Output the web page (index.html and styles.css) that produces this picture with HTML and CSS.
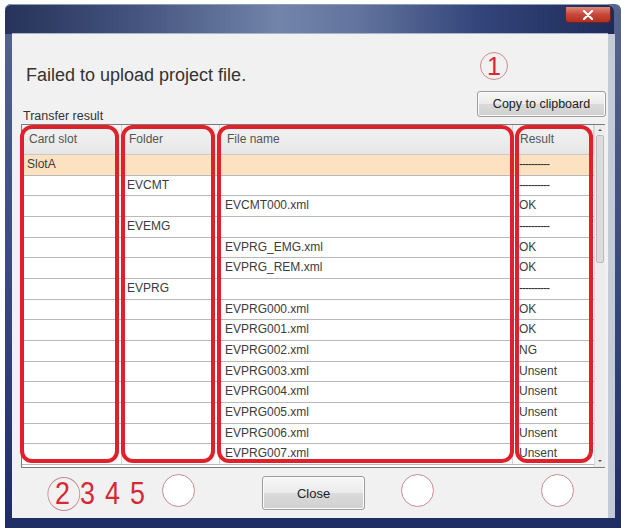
FILE: index.html
```html
<!DOCTYPE html>
<html lang="en">
<head>
  <meta charset="UTF-8">
  <title>Transfer result</title>
  <link rel="stylesheet" href="styles.css">
</head>
<body>

  <div class="window">
    <!-- Title bar -->
    <div class="titlebar">
      <button class="close-x" aria-label="Close">
        <svg width="12" height="10" viewBox="0 0 12 10">
          <path d="M2 1 L10 9 M10 1 L2 9" stroke="#fff" stroke-width="2.2" stroke-linecap="round"/>
        </svg>
      </button>
    </div>

    <div class="client">
      <!-- Message + copy button -->
      <div class="head">
        <div class="head-left">
          <p class="message">Failed to upload project file.</p>
          <p class="caption">Transfer result</p>
        </div>
        <div class="head-right">
          <span class="mark mark-1">1</span>
          <button class="btn btn-copy">Copy to clipboard</button>
        </div>
      </div>

      <!-- Result list -->
      <div class="grid">
        <div class="grid-main">
          <div class="row row-head">
            <div class="cell">Card slot</div>
            <div class="cell">Folder</div>
            <div class="cell">File name</div>
            <div class="cell">Result</div>
          </div>
          <div class="rows">
            <div class="row row-sel">
              <div class="cell">SlotA</div><div class="cell"></div><div class="cell"></div><div class="cell res"><span class="dash">----------</span></div>
            </div>
            <div class="row">
              <div class="cell"></div><div class="cell">EVCMT</div><div class="cell"></div><div class="cell res"><span class="dash">----------</span></div>
            </div>
            <div class="row">
              <div class="cell"></div><div class="cell"></div><div class="cell">EVCMT000.xml</div><div class="cell res">OK</div>
            </div>
            <div class="row">
              <div class="cell"></div><div class="cell">EVEMG</div><div class="cell"></div><div class="cell res"><span class="dash">----------</span></div>
            </div>
            <div class="row">
              <div class="cell"></div><div class="cell"></div><div class="cell">EVPRG_EMG.xml</div><div class="cell res">OK</div>
            </div>
            <div class="row">
              <div class="cell"></div><div class="cell"></div><div class="cell">EVPRG_REM.xml</div><div class="cell res">OK</div>
            </div>
            <div class="row">
              <div class="cell"></div><div class="cell">EVPRG</div><div class="cell"></div><div class="cell res"><span class="dash">----------</span></div>
            </div>
            <div class="row">
              <div class="cell"></div><div class="cell"></div><div class="cell">EVPRG000.xml</div><div class="cell res">OK</div>
            </div>
            <div class="row">
              <div class="cell"></div><div class="cell"></div><div class="cell">EVPRG001.xml</div><div class="cell res">OK</div>
            </div>
            <div class="row">
              <div class="cell"></div><div class="cell"></div><div class="cell">EVPRG002.xml</div><div class="cell res">NG</div>
            </div>
            <div class="row">
              <div class="cell"></div><div class="cell"></div><div class="cell">EVPRG003.xml</div><div class="cell res">Unsent</div>
            </div>
            <div class="row">
              <div class="cell"></div><div class="cell"></div><div class="cell">EVPRG004.xml</div><div class="cell res">Unsent</div>
            </div>
            <div class="row">
              <div class="cell"></div><div class="cell"></div><div class="cell">EVPRG005.xml</div><div class="cell res">Unsent</div>
            </div>
            <div class="row">
              <div class="cell"></div><div class="cell"></div><div class="cell">EVPRG006.xml</div><div class="cell res">Unsent</div>
            </div>
            <div class="row">
              <div class="cell"></div><div class="cell"></div><div class="cell">EVPRG007.xml</div><div class="cell res">Unsent</div>
            </div>
          </div>
        </div>

        <div class="scrollbar">
          <svg class="arrow" width="10" height="8" viewBox="0 0 10 8"><path d="M3 5 L5 3 L7 5 Z" fill="#555"/></svg>
          <div class="thumb"></div>
          <svg class="arrow arrow-down" width="10" height="8" viewBox="0 0 10 8"><path d="M3 3 L7 3 L5 5 Z" fill="#555"/></svg>
        </div>

        <!-- red annotation frames -->
        <div class="callout callout-slot"></div>
        <div class="callout callout-folder"></div>
        <div class="callout callout-file"></div>
        <div class="callout callout-result"></div>
      </div>

      <!-- Footer with annotation marks -->
      <div class="foot">
        <div class="digits">
          <span class="digit digit-ring">2</span>
          <span class="digit">3</span>
          <span class="digit">4</span>
          <span class="digit">5</span>
        </div>
        <span class="ring ring-a"></span>
        <button class="btn btn-close">Close</button>
        <span class="ring ring-b"></span>
        <span class="ring ring-c"></span>
      </div>
    </div>
  </div>

</body>
</html>
```

FILE: styles.css
```css
/* General */
body {
  margin: 0;
  width: 621px;
  height: 528px;
  overflow: hidden;
  background: #fff;
  font-family: "Liberation Sans", Arial, sans-serif;
  color: #333;
}

p {
  margin: 0;
}

/* Window frame */
.window {
  margin: 4px 0 0 5px;
  width: 616px;
  height: 530px;
  padding: 0 13px 0 7px;
  box-sizing: border-box;
  border-radius: 6px 6px 0 0;
  background: linear-gradient(to bottom, #56658c, #34457a 60%, #1d2d63);
}

.titlebar {
  height: 30px;
  display: flex;
  justify-content: flex-end;
  align-items: flex-start;
  margin: 0 -6px 0 -7px;
  padding-right: 3px;
  border-radius: 6px 6px 0 0;
  background: linear-gradient(to right, #26335a 0%, #45557f 22%, #7284aa 45%, #62749d 58%, #33447a 78%, #1f2c5a 100%);
  box-shadow: inset 0 1px 0 #8d9bbb;
}

.close-x {
  margin-top: 3px;
  width: 46px;
  height: 16px;
  padding: 0;
  display: flex;
  align-items: center;
  justify-content: center;
  border: 1px solid #6a2420;
  border-top: none;
  border-radius: 0 0 4px 4px;
  background: linear-gradient(to bottom, #e0867a, #c9473a 50%, #b3301f);
}

.client {
  width: 596px;
  height: 484px;
  padding: 0 3px 0 9px;
  box-sizing: border-box;
  display: flex;
  flex-direction: column;
  background: #f1f1f1;
  box-shadow: 7px 0 0 #c4cad6, 0 -1px 0 #a9b4cb;
}

/* Top part */
.head {
  height: 90px;
  display: flex;
  justify-content: space-between;
}

.message {
  margin-top: 30px;
  padding-left: 5px;
  font-size: 18px;
  line-height: 22px;
  color: #333;
}

.caption {
  margin: 22px 0 0 2px;
  font-size: 12.5px;
  line-height: 16px;
  color: #333;
}

.head-right {
  width: 129px;
  margin-right: -1px;
  display: flex;
  flex-direction: column;
  align-items: flex-start;
}

.mark {
  color: #d42a35;
}

.mark-1 {
  margin: 18px 0 0 3px;
  width: 28px;
  height: 28px;
  box-sizing: border-box;
  border: 1px solid #c98c93;
  border-radius: 50%;
  font-size: 25px;
  line-height: 27px;
  text-align: center;
}

.btn {
  font-family: "Liberation Sans", Arial, sans-serif;
  color: #222;
  border: 1px solid #9d9d9d;
  border-radius: 3px;
  background: linear-gradient(to bottom, #f7f7f7, #ebebeb 48%, #dadada 52%, #d0d0d0);
  box-shadow: inset 0 0 0 1px #fbfbfb;
  padding: 0;
}

.btn-copy {
  margin-top: 11px;
  width: 129px;
  height: 26px;
  font-size: 12.5px;
}

/* Result list */
.grid {
  position: relative;
  height: 344px;
  display: flex;
  border: 1px solid #7b7b7b;
  background: #fff;
}

.grid-main {
  width: 572px;
}

.row {
  display: grid;
  grid-template-columns: 100px 98px 293px 81px;
  height: 20.66px;
  box-sizing: border-box;
  border-bottom: 1px solid #b9b9b9;
  font-size: 12px;
  color: #3c3c3c;
}

.row-head {
  height: 30px;
  background: linear-gradient(to bottom, #f3f3f3, #e6e6e6);
  border-bottom: 1px solid #c9c9c9;
  color: #555;
}

.row-head .cell {
  padding-left: 7px;
  line-height: 29px;
}

.rows {
  height: 312px;
  overflow: hidden;
}

.row-sel {
  background: #fde2c2;
}

.cell {
  padding-left: 5px;
  border-right: 1px solid #d2d2d2;
  white-space: nowrap;
  overflow: hidden;
  line-height: 19px;
}

.cell.res {
  padding-left: 6px;
  border-right: none;
}

.dash {
  letter-spacing: -1px;
  color: #333;
}

.scrollbar {
  width: 10px;
  display: flex;
  flex-direction: column;
  align-items: center;
  background: #ececec;
  border-left: 1px solid #d9d9d9;
}

.arrow {
  margin-top: 1px;
}

.thumb {
  margin-top: 1px;
  width: 8px;
  height: 128px;
  box-sizing: border-box;
  border: 1px solid #bcbcbc;
  border-radius: 2px;
  background: #dcdcdc;
}

.arrow-down {
  margin-top: auto;
  margin-bottom: 2px;
}

/* red annotation frames over the list */
.callout {
  position: absolute;
  top: 0;
  height: 338px;
  box-sizing: border-box;
  border: 4px solid #e0212c;
  border-radius: 12px;
}

.callout-slot {
  left: -2px;
  width: 99px;
}

.callout-folder {
  left: 99px;
  width: 94px;
}

.callout-file {
  left: 195px;
  width: 297px;
}

.callout-result {
  left: 493px;
  width: 78px;
}

/* Footer */
.foot {
  height: 50px;
  display: flex;
  align-items: center;
}

.digits {
  margin-left: 34px;
  display: flex;
  color: #d42a35;
  font-size: 32px;
  line-height: 34px;
}

.digit {
  display: inline-block;
  width: 25px;
  transform: scaleX(0.84);
  transform-origin: left center;
}

.digit-ring {
  position: relative;
}

.digit-ring::after {
  content: "";
  position: absolute;
  left: -9px;
  top: 50%;
  margin-top: -16px;
  width: 37px;
  height: 32px;
  border: 1px solid #c58a92;
  border-radius: 50%;
}

.ring {
  width: 33px;
  height: 33px;
  box-sizing: border-box;
  border: 1.5px solid #c78a92;
  border-radius: 50%;
  margin-bottom: 6px;
  background: #fff;
}

.ring-a {
  margin-left: 7px;
}

.btn-close {
  margin-left: 67px;
  width: 103px;
  height: 34px;
  font-size: 13px;
}

.ring-b {
  margin-left: 36px;
}

.ring-c {
  margin-left: 107px;
}
```
